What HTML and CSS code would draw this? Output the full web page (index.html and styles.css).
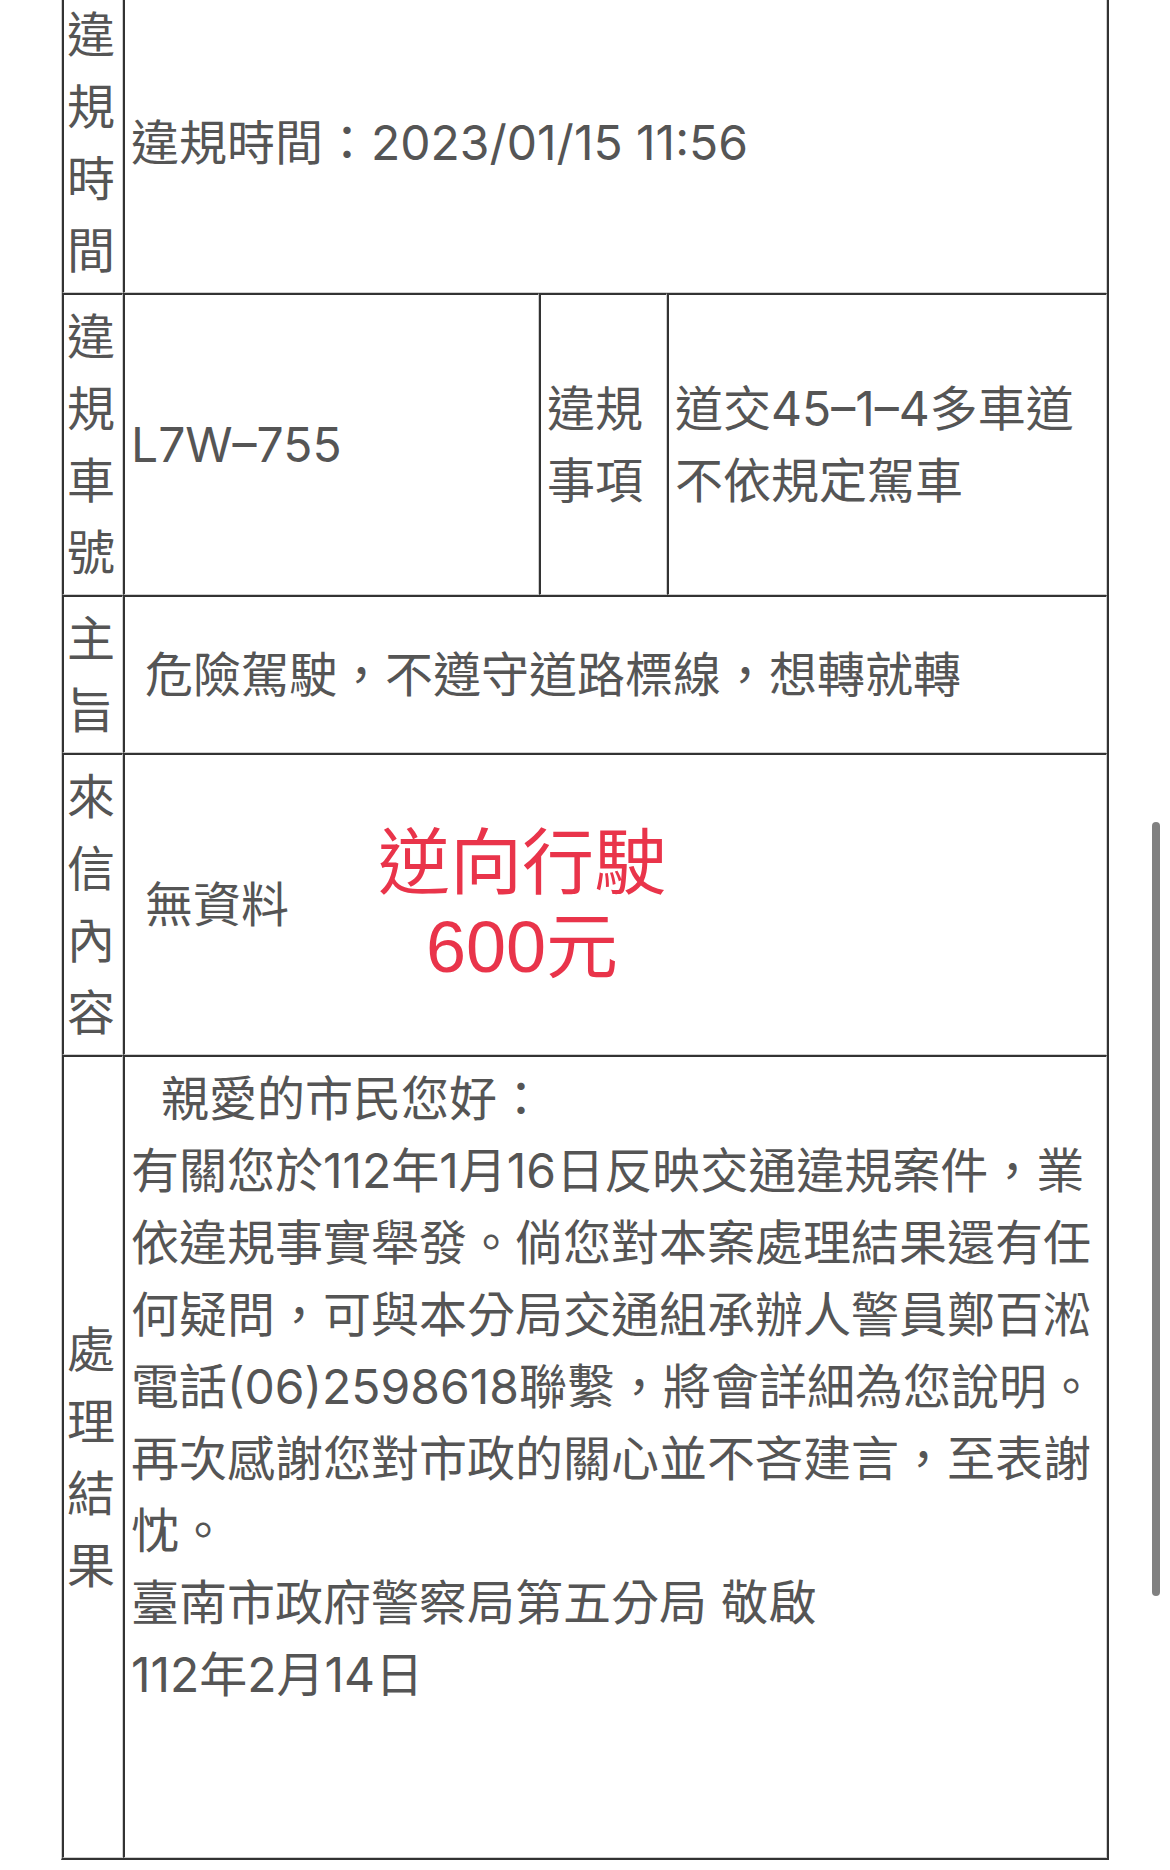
FILE: index.html
```html
<!DOCTYPE html>
<html lang="zh-Hant">
<head>
<meta charset="utf-8">
<title>交通違規檢舉處理結果</title>
<link rel="stylesheet" href="styles.css">
</head>
<body>
<table class="case">
  <colgroup>
    <col class="c1"><col class="c2"><col class="c3"><col class="c4">
  </colgroup>
  <tr>
    <th class="lbl">違<br>規<br>時<br>間</th>
    <td class="val" colspan="3">違規時間：2023/01/15 11:56</td>
  </tr>
  <tr>
    <th class="lbl">違<br>規<br>車<br>號</th>
    <td class="val">L7W–755</td>
    <td class="val">違規<br>事項</td>
    <td class="val">道交45–1–4多車道<br>不依規定駕車</td>
  </tr>
  <tr>
    <th class="lbl">主<br>旨</th>
    <td class="val" colspan="3"><span class="ind1">危險駕駛，不遵守道路標線，想轉就轉</span></td>
  </tr>
  <tr>
    <th class="lbl">來<br>信<br>內<br>容</th>
    <td class="val" colspan="3">
      <div class="letter">
        <span class="ind1">無資料</span>
        <div class="stamp">逆向行駛<br>600元</div>
      </div>
    </td>
  </tr>
  <tr>
    <th class="lbl">處<br>理<br>結<br>果</th>
    <td class="val reply" colspan="3"><span class="ind2">親愛的市民您好：</span><br>有關您於112年1月16日反映交通違規案件，業<br>依違規事實舉發。倘您對本案處理結果還有任<br>何疑問，可與本分局交通組承辦人警員鄭百淞<br>電話(06)2598618聯繫，將會詳細為您說明。<br>再次感謝您對市政的關心並不吝建言，至表謝<br>忱。<br>臺南市政府警察局第五分局 敬啟<br>112年2月14日</td>
  </tr>
</table>
<div class="scroll-ind"></div>
</body>
</html>
```
FILE: styles.css
```css
html, body {
  margin: 0;
  padding: 0;
  background: #ffffff;
}

body {
  font-family: Inter, "Noto Sans CJK TC", sans-serif;
  font-variant-numeric: proportional-nums;
  color: #555555;
  font-size: 48px;
  line-height: 72px;
  overflow: hidden;
  height: 1870px;
}

.case {
  margin: -10px 0 0 61px;
  width: 1048px;
  table-layout: fixed;
  border-collapse: separate;
  border-spacing: 0;
  border-top: 1px solid #cfcfcf;
  border-left: 1px solid #cfcfcf;
  border-right: 2px solid #333333;
  border-bottom: 2px solid #333333;
}

.c1 { width: 61px; }
.c2 { width: 416px; }
.c3 { width: 128px; }
.c4 { width: 440px; }

.case th,
.case td {
  border-top: 2px solid #333333;
  border-left: 2px solid #333333;
  border-right: 1px solid #cfcfcf;
  border-bottom: 1px solid #cfcfcf;
  padding: 6px 6px 5px 6px;
  vertical-align: middle;
  text-align: left;
  font-weight: normal;
  white-space: nowrap;
}

.case th.lbl {
  padding: 6px 5px 5px 1px;
  text-align: center;
}

.ind1 { padding-left: 14px; }
.ind2 { padding-left: 30px; }

.letter {
  display: flex;
  align-items: center;
  gap: 89px;
}

.stamp {
  font-family: "Liberation Sans", "Noto Sans CJK TC", sans-serif;
  color: #e9344a;
  font-size: 72px;
  line-height: 84px;
  text-align: center;
  width: 288px;
}

.case td.reply {
  vertical-align: top;
  padding-bottom: 146px;
}

.scroll-ind {
  position: fixed;
  left: 1152px;
  top: 822px;
  width: 8px;
  height: 774px;
  border-radius: 4px;
  background: #808080;
}
```
